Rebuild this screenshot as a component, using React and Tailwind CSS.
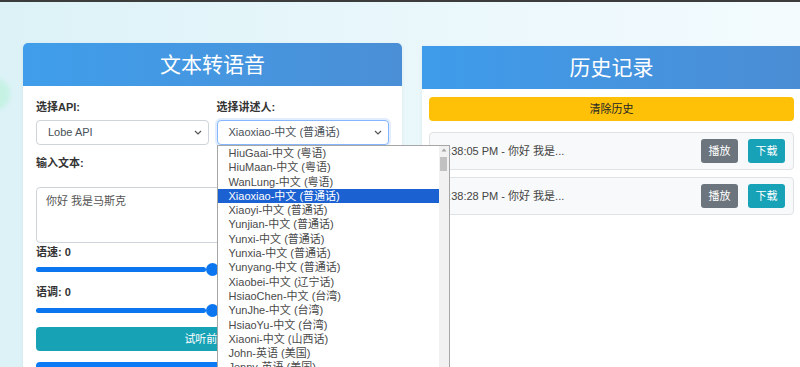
import React from 'react';

const voices = [
  'HiuGaai-中文 (粤语)',
  'HiuMaan-中文 (粤语)',
  'WanLung-中文 (粤语)',
  'Xiaoxiao-中文 (普通话)',
  'Xiaoyi-中文 (普通话)',
  'Yunjian-中文 (普通话)',
  'Yunxi-中文 (普通话)',
  'Yunxia-中文 (普通话)',
  'Yunyang-中文 (普通话)',
  'Xiaobei-中文 (辽宁话)',
  'HsiaoChen-中文 (台湾)',
  'YunJhe-中文 (台湾)',
  'HsiaoYu-中文 (台湾)',
  'Xiaoni-中文 (山西话)',
  'John-英语 (美国)',
  'Jenny-英语 (美国)',
];

const history = [
  { time: '3:38:05 PM', text: '你好 我是...' },
  { time: '3:38:28 PM', text: '你好 我是...' },
];

// 下拉箭头
const Chevron = () => (
  <svg width="8" height="5" viewBox="0 0 8 5" className="shrink-0">
    <path d="M1 1l3 3 3-3" fill="none" stroke="#555" strokeWidth="1.2" />
  </svg>
);

// 自定义滑块（值为 0，拇指在中间）
const Slider = () => (
  <div className="relative flex items-center h-[14px]">
    <div className="flex-1 h-[5px] rounded-full bg-[#0b76f0]" />
    <div className="w-[13px] h-[13px] rounded-full bg-[#0b76f0] shrink-0" />
    <div className="flex-1 h-[5px] rounded-full bg-[#d9d9d9]" />
  </div>
);

const SelectBox = ({ children, focused }) => (
  <div
    className={`flex items-center justify-between h-[25px] pl-[11px] pr-[6px] bg-white rounded-[4px] border text-[11px] text-[#495057] ${
      focused
        ? 'border-[#86b7fe] shadow-[0_0_0_2px_rgba(13,110,253,0.12)]'
        : 'border-[#ced4da]'
    }`}
  >
    <span>{children}</span>
    <Chevron />
  </div>
);

const App = () => {
  return (
    <div className="relative w-[800px] h-[367px] overflow-hidden border-t-2 border-[#3c3c3c] bg-linear-to-r from-[#dcf2f7] via-[#e9f7fb] to-[#f3fbfe] font-['Liberation_Sans','Noto_Sans_CJK_SC',sans-serif]">
      {/* 左侧装饰圆 */}
      <div className="absolute -left-[22px] top-[76px] w-[32px] h-[32px] rounded-full bg-[#c6f2e4] blur-[2px]" />

      <div className="flex gap-[20px] pl-[23px] pt-[41px]">
        {/* 文本转语音 */}
        <div className="w-[379px] h-[340px] shrink-0 bg-white rounded-t-[5px] shadow-[0_1px_4px_rgba(0,0,0,0.06)]">
          <div className="h-[43px] flex items-center justify-center rounded-t-[5px] bg-linear-to-r from-[#3f9eeb] to-[#4a8fd6] text-white text-[21px]">
            文本转语音
          </div>

          <div className="px-[13px] pt-[12px]">
            <div className="grid grid-cols-2 gap-x-[8px]">
              <div>
                <p className="h-[18px] leading-[18px] text-[11px] font-bold text-[#333]">选择API:</p>
                <div className="mt-[4px]">
                  <SelectBox>Lobe API</SelectBox>
                </div>
              </div>
              <div>
                <p className="h-[18px] leading-[18px] text-[11px] font-bold text-[#333]">选择讲述人:</p>
                <div className="relative mt-[4px]">
                  <SelectBox focused>Xiaoxiao-中文 (普通话)</SelectBox>

                  {/* 打开的下拉列表 */}
                  <div className="absolute left-0 top-full z-10 flex w-[233px] h-[230px] overflow-hidden bg-white border border-[#a6a6a6]">
                    <ul className="flex-1">
                      {voices.map((v) => (
                        <li
                          key={v}
                          className={`h-[14.3px] leading-[14.3px] pl-[11px] text-[11px] whitespace-nowrap ${
                            v.startsWith('Xiaoxiao') ? 'bg-[#1b61d1] text-white' : 'text-[#4a4a4a]'
                          }`}
                        >
                          {v}
                        </li>
                      ))}
                    </ul>
                    <div className="w-[10px] bg-[#f1f1f1] flex flex-col items-center pt-[1px]">
                      <svg width="6" height="6" viewBox="0 0 6 6">
                        <path d="M0.5 4.5L3 1.5L5.5 4.5Z" fill="#a3a3a3" />
                      </svg>
                      <div className="mt-[4px] w-[7px] h-[14px] bg-[#c1c1c1]" />
                    </div>
                  </div>
                </div>
              </div>
            </div>

            <p className="mt-[9px] h-[18px] leading-[18px] text-[11px] font-bold text-[#333]">输入文本:</p>
            <textarea
              defaultValue="你好 我是马斯克"
              className="mt-[15px] block w-full h-[56px] resize-none rounded-[4px] border border-[#ced4da] px-[9px] py-[5px] text-[11px] text-[#555] outline-none"
            />

            <p className="h-[18px] leading-[18px] text-[11px] font-bold text-[#333]">语速: 0</p>
            <div className="mt-[1px]">
              <Slider />
            </div>

            <p className="mt-[7px] h-[18px] leading-[18px] text-[11px] font-bold text-[#333]">语调: 0</p>
            <div className="mt-[2px]">
              <Slider />
            </div>

            <button className="mt-[10px] w-full h-[24px] rounded-[4px] bg-[#18a2b6] text-white text-[11px]">
              试听前20字
            </button>
            <button className="mt-[11px] w-full h-[24px] rounded-[4px] bg-[#0b7bf5] text-white text-[11px]">
              生成语音
            </button>
          </div>
        </div>

        {/* 历史记录 */}
        <div className="w-[379px] h-[340px] shrink-0 mt-[3px] bg-white shadow-[0_1px_4px_rgba(0,0,0,0.06)]">
          <div className="h-[43px] flex items-center justify-center bg-linear-to-r from-[#3e9ceb] to-[#4a8dd4] text-white text-[21px]">
            历史记录
          </div>

          <div className="p-[7px]">
            <button className="w-full h-[24px] rounded-[4px] bg-[#ffc107] text-[11px] text-[#212529]">
              清除历史
            </button>

            <div className="mt-[11px] flex flex-col gap-[7px]">
              {history.map((h) => (
                <div
                  key={h.time}
                  className="flex items-center justify-between h-[38px] pl-[12px] pr-[8px] rounded-[4px] border border-[#dfe3e6] bg-[#f8f9fa]"
                >
                  <span className="text-[11px] text-[#444]">
                    {h.time} - {h.text}
                  </span>
                  <div className="flex gap-[10px]">
                    <button className="w-[37px] h-[24px] rounded-[3px] bg-[#6c757d] text-white text-[11px]">播放</button>
                    <button className="w-[37px] h-[24px] rounded-[3px] bg-[#17a2b8] text-white text-[11px]">下载</button>
                  </div>
                </div>
              ))}
            </div>
          </div>
        </div>
      </div>
    </div>
  );
};

export default App;
